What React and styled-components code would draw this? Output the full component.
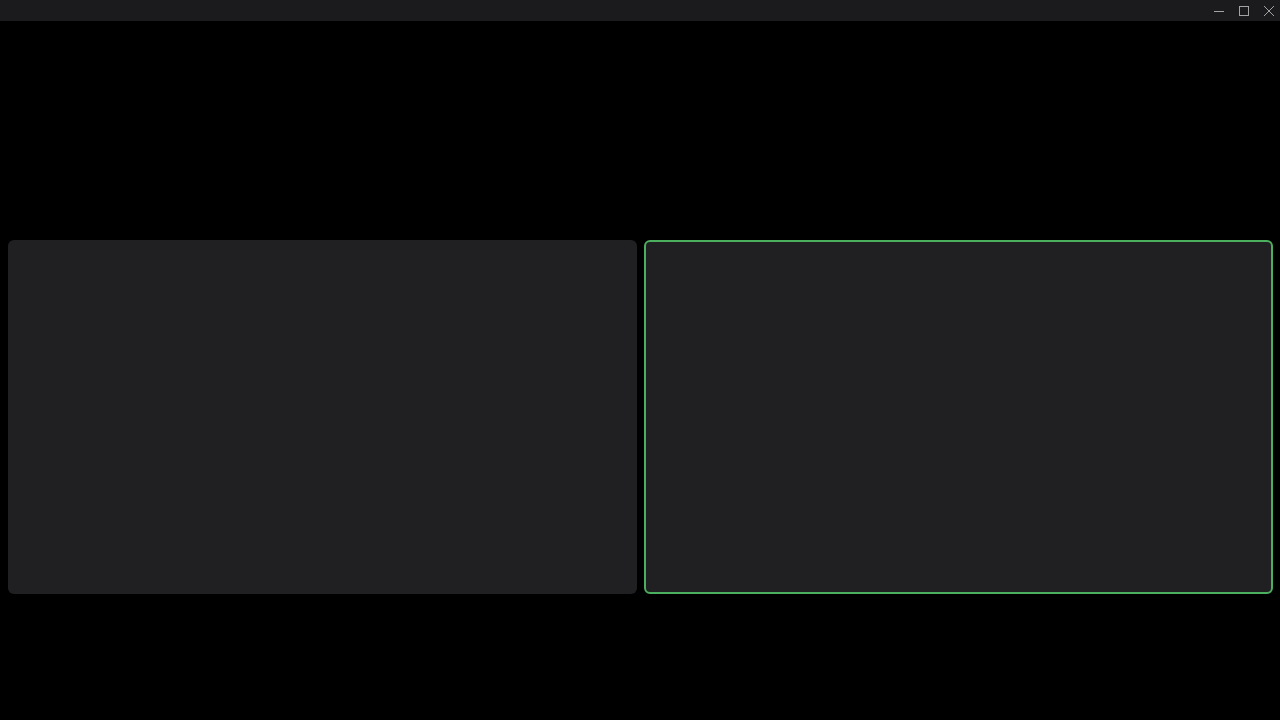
import React from "react";
import styled, { createGlobalStyle } from "styled-components";

const Global = createGlobalStyle`
  html, body { margin: 0; padding: 0; background: #000; height: 100%; }
  #root { height: 100%; }
  body { font-family: "Inter", "Liberation Sans", sans-serif; overflow: hidden; }
`;

const Window = styled.div`
  width: 1280px;
  height: 720px;
  display: flex;
  flex-direction: column;
  background: #000;
`;

const TitleBar = styled.div`
  height: 21px;
  flex: none;
  background: #1b1b1e;
  display: flex;
  justify-content: flex-end;
  align-items: stretch;
`;

const WinButton = styled.button`
  width: 25px;
  height: 21px;
  border: none;
  background: transparent;
  padding: 6px 0 0 9px;
  box-sizing: border-box;
  display: flex;
  align-items: flex-start;
  justify-content: flex-start;
  color: #a3a3a3;
`;

const Stage = styled.div`
  flex: 1;
  padding: 219px 7px 0 8px;
`;

const Grid = styled.div`
  display: grid;
  grid-template-columns: 629px 629px;
  gap: 7px;
`;

const Tile = styled.div`
  height: 354px;
  box-sizing: border-box;
  background: #202022;
  border-radius: 6px;
  border: 2px solid ${(p) => (p.$active ? "#4caf5f" : "transparent")};
`;

export default function App() {
  return (
    <>
      <Global />
      <Window>
        <TitleBar>
          <WinButton aria-label="minimize">
            <svg width="10" height="10" viewBox="0 0 10 10">
              <path d="M0 5.5h10" stroke="currentColor" strokeWidth="1" />
            </svg>
          </WinButton>
          <WinButton aria-label="maximize">
            <svg width="10" height="10" viewBox="0 0 10 10">
              <rect x="0.5" y="0.5" width="9" height="9" fill="none" stroke="currentColor" strokeWidth="1" />
            </svg>
          </WinButton>
          <WinButton aria-label="close">
            <svg width="10" height="10" viewBox="0 0 10 10">
              <path d="M0 0L10 10M10 0L0 10" stroke="currentColor" strokeWidth="1" />
            </svg>
          </WinButton>
        </TitleBar>
        <Stage>
          <Grid>
            <Tile />
            <Tile $active />
          </Grid>
        </Stage>
      </Window>
    </>
  );
}
